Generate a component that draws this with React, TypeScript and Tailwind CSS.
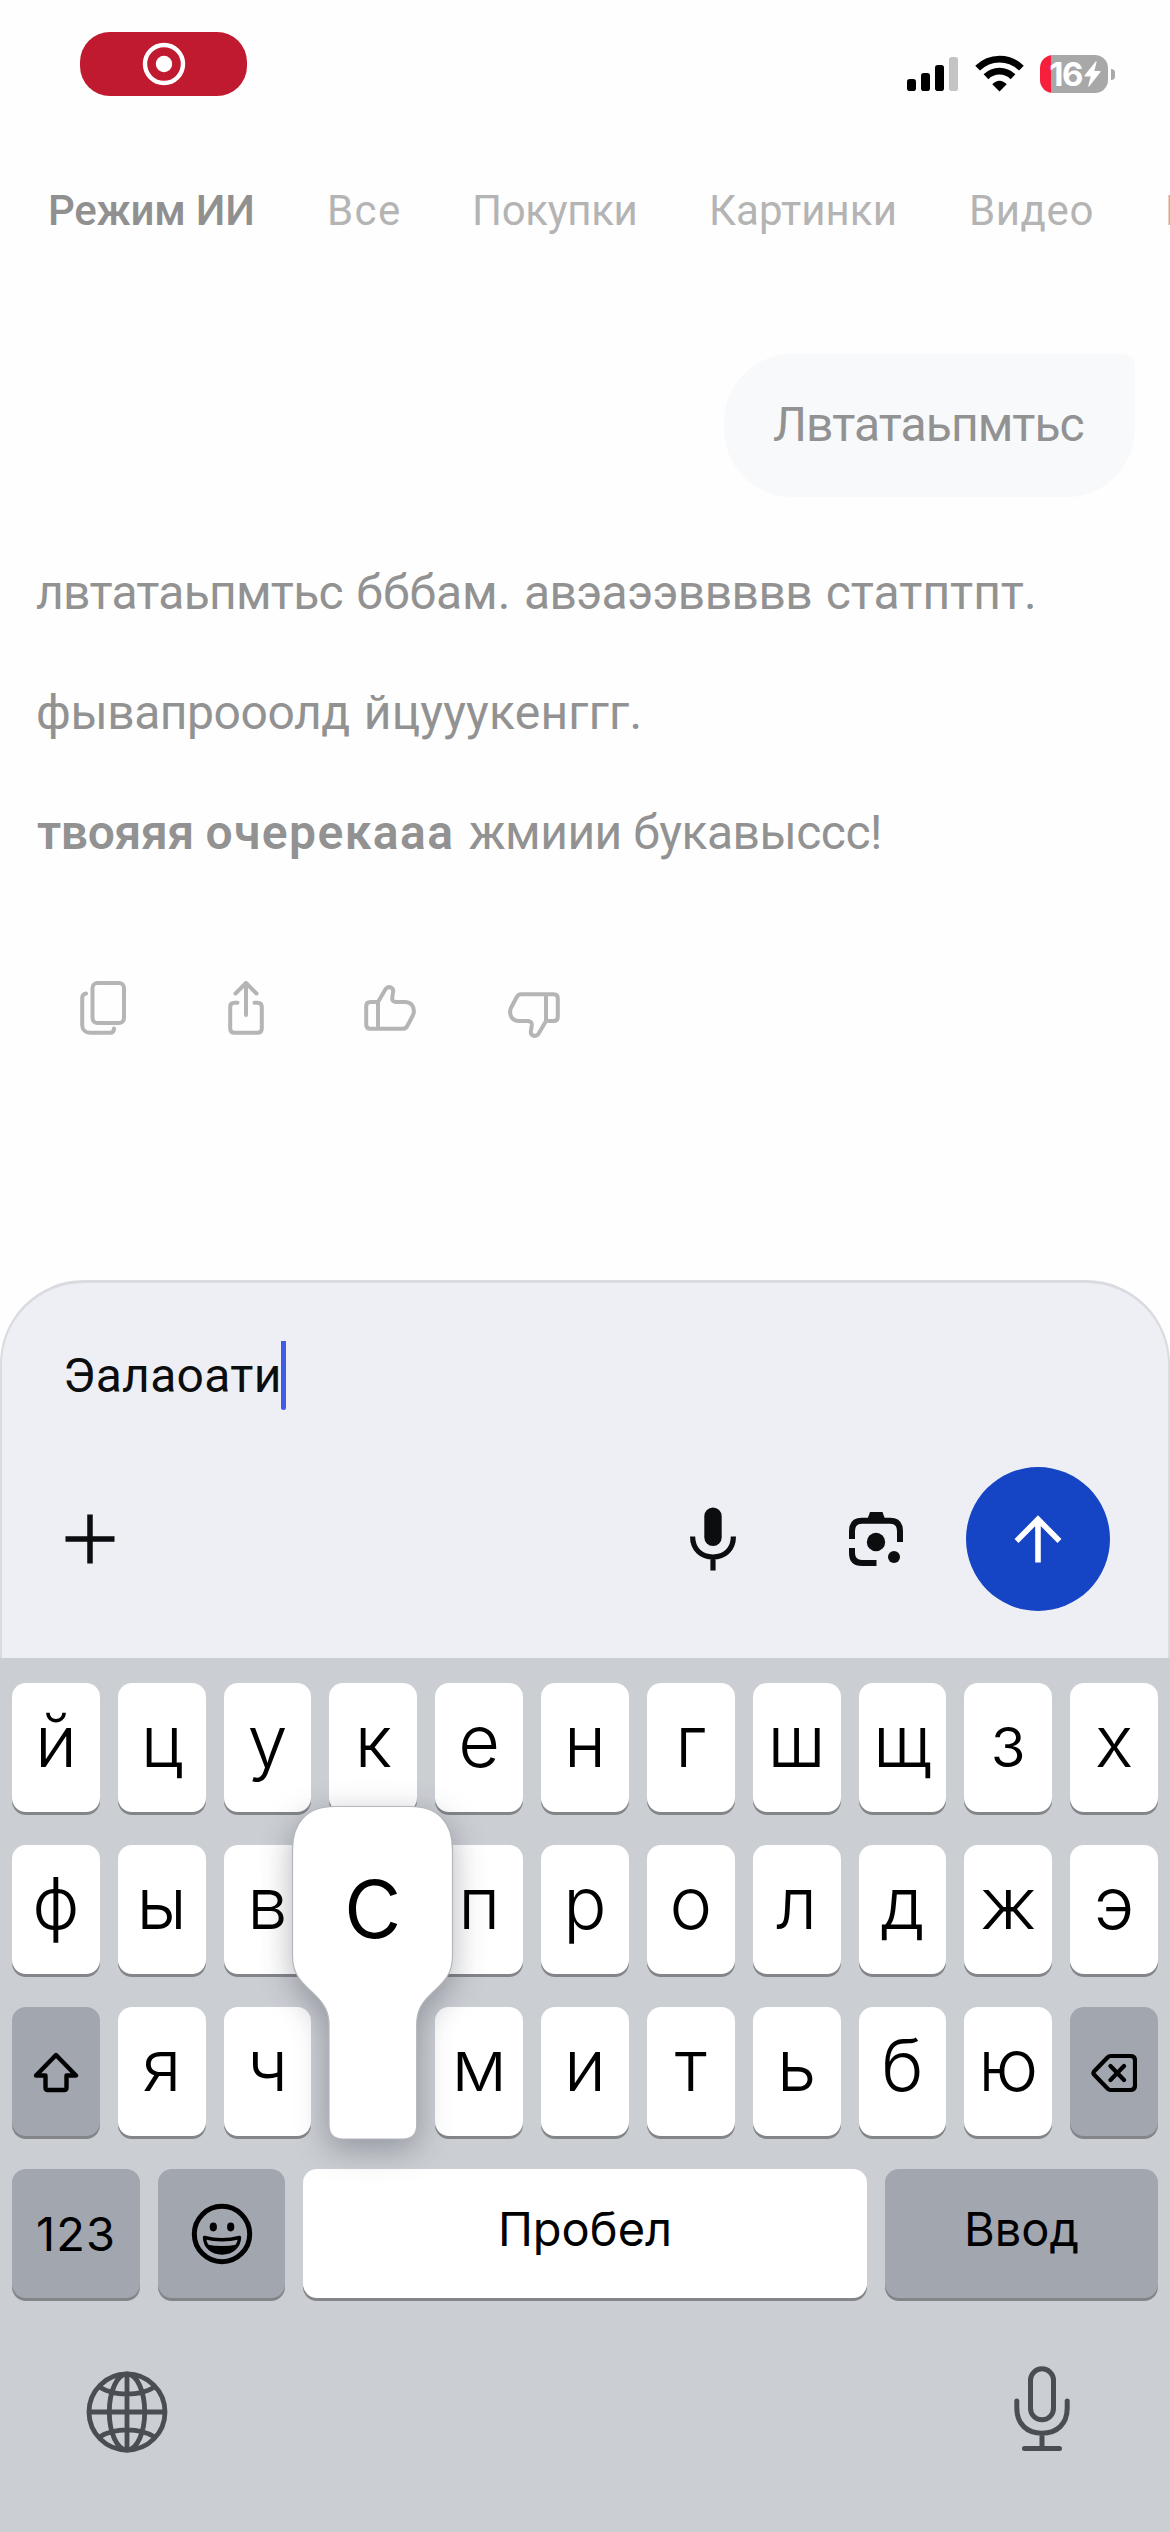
import React from 'react';

const tabs = [
  { label: 'Режим ИИ', cls: 'w-[279px] font-medium text-[#909090] tracking-[-0.24px]' },
  { label: 'Все', cls: 'w-[145px] text-[#b4b4b4] tracking-[1.4px]' },
  { label: 'Покупки', cls: 'w-[237px] text-[#b4b4b4] tracking-[-0.32px]' },
  { label: 'Картинки', cls: 'w-[260px] text-[#b4b4b4] tracking-[0.07px]' },
  { label: 'Видео', cls: 'w-[196px] text-[#b4b4b4] tracking-[0.6px]' },
  { label: 'Новости', cls: 'text-[#b4b4b4]' },
];

function StatusBar() {
  return (
    <header className="flex h-[181px] items-start justify-between pl-20 pr-[55px] pt-8">
      <div className="flex h-16 w-[167px] items-center justify-center rounded-[30px] bg-[#c01a30]">
        <svg width="44" height="44" viewBox="0 0 44 44" fill="none">
          <circle cx="22" cy="22" r="19" stroke="#fff" strokeWidth="4.4" />
          <circle cx="22" cy="22" r="8.2" fill="#fff" />
        </svg>
      </div>
      <div className="flex items-start pt-[23px]">
        <svg width="51" height="38" viewBox="0 0 51 38">
          <rect x="0" y="24" width="9" height="12" rx="2.8" />
          <rect x="14" y="18" width="9" height="18" rx="2.8" />
          <rect x="28" y="10" width="9" height="26" rx="2.8" />
          <rect x="42" y="2" width="9" height="34" rx="2.8" fill="#c4c4c4" />
        </svg>
        <svg className="ml-[17px]" width="49" height="37" viewBox="0 0 49 37" fill="none">
          <path d="M2.600 13.200C15 1 34 1 46.400 13.200" stroke="#000" strokeWidth="6.800" />
          <path d="M11 21.700C18.600 14.300 30.400 14.300 38 21.700" stroke="#000" strokeWidth="6.800" />
          <path d="M24.500 36.500L17.300 29.300C21.500 24.600 27.500 24.600 31.700 29.300Z" fill="#000" />
        </svg>
        <div className="ml-4 flex h-[38px] items-center">
          <div className="flex h-[38px] w-[68px] items-center justify-center gap-[2px] rounded-[13px] bg-[linear-gradient(to_right,#f81f3d_11px,#a8a8a8_11px)] pl-[2px] font-['Inter'] text-[33px] leading-[38px] font-bold text-white">
            <span className="tracking-[-1.5px]">16</span>
            <svg width="17" height="26" viewBox="0 0 17 26" fill="#fff" stroke="#fff" strokeWidth="1.200" strokeLinejoin="round">
              <path d="M12 1L1 14.800H7.500L4.800 25L16 10.600H9.500Z" />
            </svg>
          </div>
          <div className="ml-[3px] h-[11px] w-1 rounded-r-full bg-[#a8a8a8]" />
        </div>
      </div>
    </header>
  );
}

const thumbPath =
  'M14 17L21.500 4.200C23 2 25 1.800 27 2.500C29 3.500 29.500 5.500 29 7.500L28.200 13C28 15.500 29.500 17 32 17H41C47 17 50.500 21.500 49.800 27.500C49.600 29 49 30.200 48.300 31.500L43.500 40.500C42.500 42.500 41.500 43.800 39 43.800H6.500Q2.200 43.800 2.200 39.500V21.300Q2.200 17 6.500 17Z M14 17V43.800';

function Actions() {
  return (
    <div className="flex h-[61px] items-start pl-[80px]">
      <svg width="46" height="54" viewBox="0 0 46 54" fill="none" stroke="#b5b5b5" strokeWidth="4" strokeLinecap="round">
        <rect x="12.500" y="2" width="31.500" height="40" rx="5" />
        <path d="M6 12.500C3.500 13 2.200 14.500 2.200 17V44C2.200 48.500 5.500 51.800 10 51.800H30C33 51.800 34 50 34 47.500" />
      </svg>
      <svg className="ml-[102px]" width="36" height="54" viewBox="0 0 36 54" fill="none" stroke="#b5b5b5" strokeWidth="4" strokeLinecap="round" strokeLinejoin="round">
        <path d="M18 34V2.500M7.500 12.500L18 2L28.500 12.500M9.500 21.700H6.500Q2.200 21.700 2.200 26V47.500Q2.200 51.800 6.500 51.800H29.500Q33.800 51.800 33.800 47.500V26Q33.800 21.700 29.500 21.700H26.500" />
      </svg>
      <svg className="mt-1 ml-[100px]" width="52" height="46" viewBox="0 0 52 46" fill="none" stroke="#b5b5b5" strokeWidth="4" strokeLinejoin="round">
        <path d={thumbPath} />
      </svg>
      <svg className="mt-[11px] ml-[92px] rotate-180" width="52" height="46" viewBox="0 0 52 46" fill="none" stroke="#b5b5b5" strokeWidth="4" strokeLinejoin="round">
        <path d={thumbPath} />
      </svg>
    </div>
  );
}

function Composer() {
  return (
    <section className="mt-[238px] h-[378px] rounded-t-[84px] border-x-2 border-t-[3px] border-[#d9dbe0] bg-[#eeeff4]">
      <div className="mt-[58px] flex h-[69px] items-center pl-[61px]">
        <span className="text-[48px] leading-[69px] tracking-[0.3px] text-[#0c0d0f]">Эалаоати</span>
        <span className="-ml-[1px] h-[69px] w-[5.5px] rounded-b-sm bg-[#405ce4]" />
      </div>
      <div className="mt-[57px] flex h-36 items-center pr-[58px] pl-[63px]">
        <svg width="50" height="50" viewBox="0 0 50 50" stroke="#0c0d0f" strokeWidth="5.500">
          <path d="M25 .5V49.500M.5 25H49.500" />
        </svg>
        <svg className="ml-auto" width="46" height="64" viewBox="0 0 46 64" fill="none">
          <rect x="14.300" y="0.500" width="17.400" height="38.500" rx="8.700" fill="#0c0d0f" />
          <path d="M2.600 29.500C2.600 42.500 11.500 50 23 50S43.400 42.500 43.400 29.500M23 50V63.500" stroke="#0c0d0f" strokeWidth="5.200" />
        </svg>
        <svg className="ml-[113px]" width="54" height="54" viewBox="0 0 54 54" fill="none">
          <path d="M3 27V19Q3 8.700 13 8.700H41Q51 8.700 51 19V30M3 36V41Q3 51 13 51H27.500" stroke="#0c0d0f" strokeWidth="6" />
          <path d="M18.500 7L21 0H33.500L36 7Z" fill="#0c0d0f" />
          <circle cx="27" cy="30" r="9.200" fill="#0c0d0f" />
          <circle cx="45" cy="45" r="6" fill="#0c0d0f" />
        </svg>
        <div className="ml-[63px] flex h-36 w-36 items-center justify-center rounded-full bg-[#1544c4]">
          <svg width="48" height="48" viewBox="0 0 48 48" fill="none" stroke="#fff" strokeWidth="5.600">
            <path d="M24 47.500V4.500M2.500 26L24 4.300L45.500 26" />
          </svg>
        </div>
      </div>
    </section>
  );
}

const keyBase = 'flex h-[129px] items-center justify-center rounded-[14px] shadow-[0_3px_0_#838589]';

function LetterKey({ ch = '' }: { ch?: string }) {
  return (
    <div className={`${keyBase} flex-1 basis-0 bg-white pb-[13px] text-[72px] leading-[90px] font-[340]`}>{ch}</div>
  );
}

function PressedKey({ ch }: { ch: string }) {
  return (
    <div className="relative h-[129px] flex-1 basis-0">
      <svg
        className="absolute top-[-201px] left-[-37px] z-10 max-w-none overflow-visible drop-shadow-[0_9px_16px_rgba(30,35,50,0.34)]"
        width="161"
        height="334"
        viewBox="0 0 161 334"
      >
        <path
          d="M43 .500H118C146 .500 160.500 16 160.500 44V150C160.500 170 150 177 137 190C128 199 124.700 207 124.700 219V319Q124.700 333 110.700 333H51Q37 333 37 319V219C37 207 33 199 24 190C11 177 .5 170 .5 150V44C.5 16 15 .500 43 .500Z"
          fill="#fff"
          stroke="#b4b6bb"
          strokeWidth="1.200"
        />
      </svg>
      <span className="absolute top-[-200px] left-[-37px] z-20 flex h-[185px] w-[161px] items-center justify-center text-[107px] leading-[185px] font-[330]">{ch}</span>
    </div>
  );
}

function Keyboard() {
  return (
    <section className="flex flex-1 flex-col gap-[33px] bg-[#cbced3] px-3 pt-[25px] font-['Inter'] text-black">
      <div className="flex gap-[18px]">
        {[...'йцукенгшщзх'].map((c) => <LetterKey key={c} ch={c} />)}
      </div>
      <div className="flex gap-[18px]">
        {[...'фыв'].map((c) => <LetterKey key={c} ch={c} />)}
        <LetterKey />
        {[...'пролджэ'].map((c) => <LetterKey key={c} ch={c} />)}
      </div>
      <div className="flex gap-[18px]">
        <div className={`${keyBase} flex-1 basis-0 bg-[#a2a6af]`}>
          <svg className="mt-[2px]" width="46" height="41" viewBox="0 0 46 41" fill="none" stroke="#000" strokeWidth="4.400" strokeLinejoin="round">
            <path d="M23 3L43 23.500H33.500V35.500Q33.500 38 31 38H15Q12.500 38 12.500 35.500V23.500H3Z" />
          </svg>
        </div>
        {[...'яч'].map((c) => <LetterKey key={c} ch={c} />)}
        <PressedKey ch="с" />
        {[...'митьбю'].map((c) => <LetterKey key={c} ch={c} />)}
        <div className={`${keyBase} flex-1 basis-0 bg-[#a2a6af]`}>
          <svg className="mt-[2px]" width="46" height="40" viewBox="0 0 46 40" fill="none" stroke="#000" strokeWidth="4.200" strokeLinejoin="round" strokeLinecap="round">
            <path d="M19.500 3H39.500Q44 3 44 7.500V32.500Q44 37 39.500 37H19.500Q18 37 16.500 35.500L3 21.500Q1.800 20 3 18.500L16.500 4.500Q18 3 19.500 3Z M19.500 13L33 27M33 13L19.500 27" />
          </svg>
        </div>
      </div>
      <div className="flex gap-[18px] text-[47px] leading-[60px]">
        <div className={`${keyBase} w-32 bg-[#a2a6af] tracking-[1.1px]`}>123</div>
        <div className={`${keyBase} w-[127px] bg-[#a2a6af]`}>
          <svg width="62" height="62" viewBox="0 0 62 62" fill="none" stroke="#000">
            <circle cx="31" cy="31" r="27.700" strokeWidth="5" />
            <ellipse cx="22.300" cy="24" rx="3.600" ry="4.400" fill="#000" stroke="none" />
            <ellipse cx="39.700" cy="24" rx="3.600" ry="4.400" fill="#000" stroke="none" />
            <path d="M13.500 34.500Q31 39 48.500 34.500C48 44 41 50 31 50S14 44 13.500 34.500Z" strokeWidth="3.400" strokeLinejoin="round" />
            <path d="M15.500 41.500Q31 44.500 46.500 41.500C43 48 38 50 31 50S19 48 15.500 41.500Z" fill="#000" stroke="none" />
          </svg>
        </div>
        <div className={`${keyBase} w-[564px] bg-white pb-[9px]`}>Пробел</div>
        <div className={`${keyBase} flex-1 bg-[#a2a6af] pb-[9px]`}>Ввод</div>
      </div>
      <div className="mt-[35px] flex items-start justify-between pr-[88px] pl-[74px]">
        <svg className="mt-[5px]" width="82" height="82" viewBox="0 0 82 82" fill="none" stroke="#4a4d51" strokeWidth="4.800">
          <circle cx="41" cy="41" r="38" />
          <ellipse cx="41" cy="41" rx="17.700" ry="38" />
          <path d="M41 3V79M3 41H79M13.500 16C28 25.500 54 25.500 68.500 16M13.500 66C28 56.500 54 56.500 68.500 66" />
        </svg>
        <svg width="56" height="86" viewBox="0 0 56 86" fill="none" stroke="#4a4d51" strokeWidth="5" strokeLinecap="round">
          <rect x="16.500" y="2.800" width="23" height="51" rx="11.500" />
          <path d="M2.800 35V42C2.800 58 13 67.200 28 67.200S53.200 58 53.200 42V35M28 67.200V82.500M10.500 82.500H45.500" />
        </svg>
      </div>
    </section>
  );
}

export default function App() {
  return (
    <main className="flex h-[2532px] w-[1170px] flex-col overflow-hidden bg-[#fefefe] font-['Roboto',sans-serif]">
      <StatusBar />
      <nav className="flex h-[60px] overflow-hidden pl-12 text-[42px] leading-[60px] whitespace-nowrap">
        {tabs.map((t) => (
          <span key={t.label} className={`shrink-0 ${t.cls}`}>{t.label}</span>
        ))}
      </nav>
      <div className="mt-[113px] flex justify-end pr-[35px]">
        <div className="h-[143px] w-[411px] rounded-[68px] rounded-tr-[12px] bg-[#f8f9fb] pl-[49px] text-[48px] leading-[141px] tracking-[-0.94px] text-[#929292]">
          Лвтатаьпмтьс
        </div>
      </div>
      <article className="mt-[36px] mb-[88px] pl-9 text-[48px] leading-[120px] whitespace-nowrap text-[#929292]">
        <p className="[word-spacing:1.6px]">
          <span className="tracking-[-0.75px]">лвтатаьпмтьс</span> бббам.{' '}
          <span className="tracking-[-0.55px]">авэаээввввв</span> статптпт.
        </p>
        <p className="[word-spacing:2px]">
          <span className="tracking-[-0.45px]">фывапрооолд</span> <span className="tracking-[0.2px]">йцууукенггг.</span>
        </p>
        <p className="pl-[1px] tracking-[-0.5px]">
          <b className="font-semibold">
            <span className="tracking-[-0.3px]">твояяя</span> <span className="tracking-[1.4px]">очерекааа</span>
          </b>
          <span className="pl-[3px]"> жмиии букавыссс!</span>
        </p>
      </article>
      <Actions />
      <Composer />
      <Keyboard />
    </main>
  );
}
